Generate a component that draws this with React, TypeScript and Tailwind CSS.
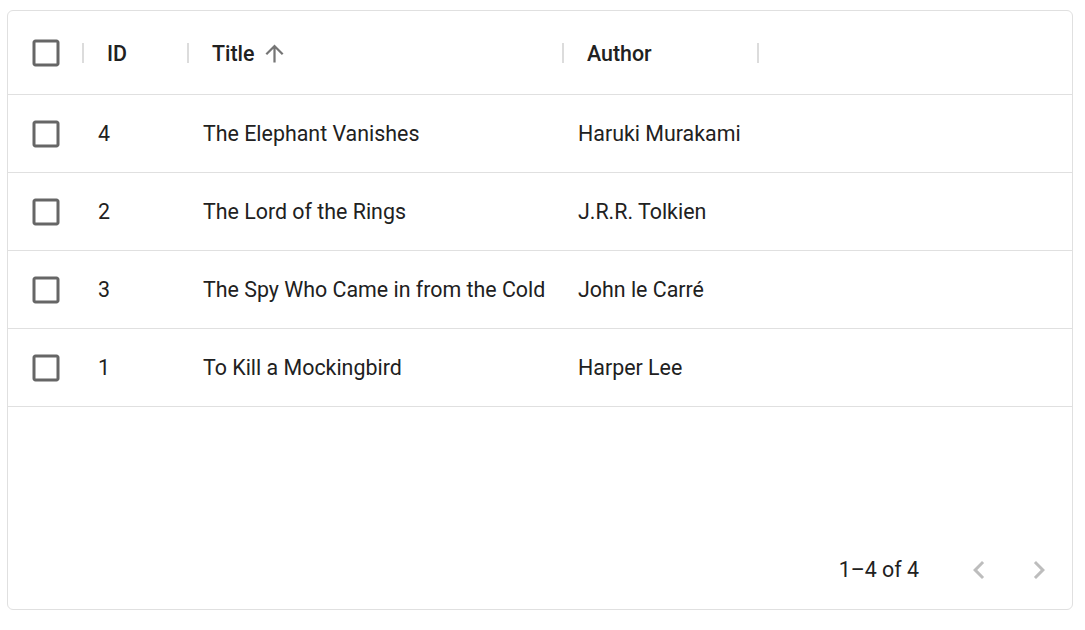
const rows = [
  { id: 4, title: "The Elephant Vanishes", author: "Haruki Murakami" },
  { id: 2, title: "The Lord of the Rings", author: "J.R.R. Tolkien" },
  { id: 3, title: "The Spy Who Came in from the Cold", author: "John le Carré" },
  { id: 1, title: "To Kill a Mockingbird", author: "Harper Lee" },
];

function Checkbox() {
  return (
    <svg viewBox="0 0 24 24" className="w-[36px] h-[36px]" fill="#666666">
      <path d="M19 5v14H5V5h14m0-2H5c-1.11 0-2 .9-2 2v14c0 1.1.89 2 2 2h14c1.1 0 2-.9 2-2V5c0-1.1-.9-2-2-2z" />
    </svg>
  );
}

function Separator() {
  return <div className="absolute right-[-1px] top-[32px] w-[2px] h-[20px] bg-[#dcdcdc]" />;
}

export default function App() {
  return (
    <div
      className="pt-[10px] pl-[7px] bg-white h-[630px]"
      style={{ fontFamily: "Roboto, 'Liberation Sans', sans-serif" }}
    >
      <div className="w-[1066px] h-[600px] border border-[#e0e0e0] rounded-[6px] flex flex-col text-[21.4px] text-[#212121]">
        {/* header */}
        <div className="flex h-[84px] border-b border-[#e0e0e0] font-medium">
          <div className="relative w-[75px] flex items-center justify-center">
            <Checkbox />
            <Separator />
          </div>
          <div className="relative w-[105px] flex items-center pl-[24px] pt-[3px]">
            ID
            <Separator />
          </div>
          <div className="relative w-[375px] flex items-center pl-[24px] pt-[3px]">
            Title
            <svg viewBox="0 0 24 24" className="w-[27px] h-[27px] ml-[6px] mb-[2px]" fill="rgba(0,0,0,0.54)">
              <path d="M4 12l1.41 1.41L11 7.83V20h2V7.83l5.58 5.59L20 12l-8-8-8 8z" />
            </svg>
            <Separator />
          </div>
          <div className="relative w-[195px] flex items-center pl-[24px] pt-[3px]">
            Author
            <Separator />
          </div>
        </div>

        {/* rows */}
        {rows.map((row) => (
          <div key={row.id} className="flex h-[78px] border-b border-[#e0e0e0]">
            <div className="w-[75px] flex items-center justify-center">
              <Checkbox />
            </div>
            <div className="w-[105px] flex items-center pl-[15px] pt-[2px]">{row.id}</div>
            <div className="w-[375px] flex items-center pl-[15px] pt-[2px] whitespace-nowrap">{row.title}</div>
            <div className="w-[195px] flex items-center pl-[15px] pt-[2px] whitespace-nowrap">{row.author}</div>
          </div>
        ))}

        <div className="flex-1" />

        {/* footer */}
        <div className="h-[78px] flex items-center justify-end pr-[3px]">
          <span>1–4 of 4</span>
          <div className="flex ml-[30px]">
            <button className="w-[60px] h-[60px] flex items-center justify-center" disabled>
              <svg viewBox="0 0 24 24" className="w-[36px] h-[36px]" fill="rgba(0,0,0,0.26)">
                <path d="M15.41 16.59 10.83 12l4.58-4.59L14 6l-6 6 6 6 1.41-1.41z" />
              </svg>
            </button>
            <button className="w-[60px] h-[60px] flex items-center justify-center" disabled>
              <svg viewBox="0 0 24 24" className="w-[36px] h-[36px]" fill="rgba(0,0,0,0.26)">
                <path d="M8.59 16.59 13.17 12 8.59 7.41 10 6l6 6-6 6-1.41-1.41z" />
              </svg>
            </button>
          </div>
        </div>
      </div>
    </div>
  );
}
